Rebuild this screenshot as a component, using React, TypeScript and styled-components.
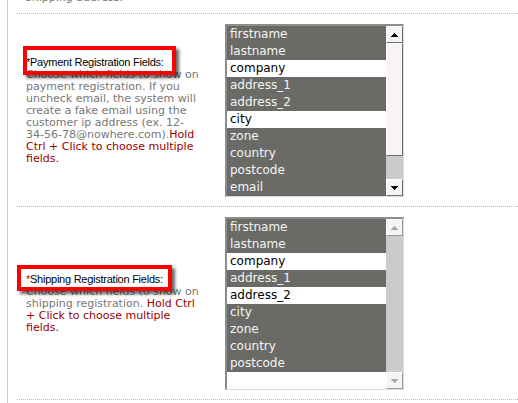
import React from 'react';
import styled, { createGlobalStyle } from 'styled-components';

const GlobalStyle = createGlobalStyle`
    html, body {
        margin: 0;
        padding: 0;
        background: #fff;
    }
    body {
        font-family: "DejaVu Sans", Verdana, sans-serif;
        overflow: hidden;
    }
`;

/**
 * PAGE FRAME
 */

const Frame = styled.div`
    margin-left: 7px;
    border-left: 1px solid #cfcfcf;
    padding-left: 9px;
    height: 403px;
    overflow: hidden;
`;

const TopRow = styled.div`
    margin-top: -8px;
    padding: 0 0 9px 9px;
    border-bottom: 1px dotted #b8b8b8;
    font-size: 11px;
    line-height: 12px;
    color: #777;
`;

const Row = styled.div`
    display: grid;
    grid-template-columns: 208px 1fr;
    border-bottom: 1px dotted #b8b8b8;
`;

const LabelCell = styled.div`
    display: flex;
    flex-direction: column;
    justify-content: center;
    padding: 0 23px 0 9px;
`;

const FieldCell = styled.div`
    padding: 10px 0 9px;
`;

/**
 * LABEL + ANNOTATION
 */

const Label = styled.div`
    position: relative;
    font-family: "Liberation Sans", Arial, sans-serif;
    font-size: 11px;
    letter-spacing: -0.25px;
    line-height: 14px;
    color: #000;
`;

const Required = styled.span<{ $red?: boolean }>`
    color: ${p => (p.$red ? '#d00000' : '#000')};
`;

interface Box {
    top: number;
    left: number;
    width: number;
    height: number;
}

const Highlight = styled.span<{ $box: Box }>`
    position: absolute;
    top: ${p => p.$box.top}px;
    left: ${p => p.$box.left}px;
    width: ${p => p.$box.width}px;
    height: ${p => p.$box.height}px;
    box-sizing: border-box;
    border: 4px solid #ff0000;
    box-shadow: 3px 3px 3px rgba(0, 0, 0, 0.6);
    z-index: 2;
    pointer-events: none;
`;

const Help = styled.div`
    font-size: 11px;
    line-height: 12px;
    color: #777;
`;

const Hint = styled.span`
    color: #990000;
`;

const NoWrap = styled.span`
    white-space: nowrap;
`;

/**
 * LIST BOX
 */

const ListBox = styled.div`
    display: flex;
    width: 179px;
    height: 173px;
    box-sizing: border-box;
    border-top: 2px solid #8c8c8c;
    border-left: 2px solid #8c8c8c;
    border-right: 1px solid #dcdcdc;
    border-bottom: 1px solid #dcdcdc;
    background: #fff;
    overflow: hidden;
`;

const Options = styled.ul`
    flex: 1;
    margin: 0;
    padding: 0;
    list-style: none;
    overflow: hidden;
`;

const Option = styled.li<{ $selected: boolean }>`
    height: 17px;
    line-height: 17px;
    padding-left: 3px;
    font-size: 12px;
    white-space: nowrap;
    background: ${p => (p.$selected ? '#6a6b67' : '#fff')};
    color: ${p => (p.$selected ? '#f4f4f4' : '#000')};
`;

const ScrollBar = styled.div`
    width: 17px;
    display: flex;
    flex-direction: column;
    background: #cbcbcb;
`;

const ScrollButton = styled.div<{ $disabled?: boolean }>`
    height: 17px;
    box-sizing: border-box;
    display: flex;
    align-items: center;
    justify-content: center;
    background: #f6f2f6;
    border: 1px solid;
    border-color: #fff ${p => (p.$disabled ? '#9a9a9a' : '#6e6e6e')} ${p => (p.$disabled ? '#9a9a9a' : '#6e6e6e')} #fff;
    color: ${p => (p.$disabled ? '#a8a8a8' : '#000')};
`;

const Thumb = styled.div<{ $size: number }>`
    height: ${p => p.$size}px;
    box-sizing: border-box;
    background: #f7f3f7;
    border: 1px solid;
    border-color: #fff #6e6e6e #6e6e6e #fff;
`;

const Track = styled.div`
    flex: 1;
`;

function Arrow({ down }: { down?: boolean }) {
    const rows = [1, 3, 5, 7];
    const order = down ? [...rows].reverse() : rows;
    return (
        <svg width="7" height="4" viewBox="0 0 7 4" shapeRendering="crispEdges">
            {order.map((w, i) => (
                <rect key={i} x={(7 - w) / 2} y={i} width={w} height={1} fill="currentColor" />
            ))}
        </svg>
    );
}

interface SelectProps {
    options: string[];
    selected: string[];
    thumb?: number;
}

function MultiSelect({ options, selected, thumb }: SelectProps) {
    const disabled = thumb === undefined;
    return (
        <ListBox>
            <Options>
                {options.map(o => (
                    <Option key={o} $selected={selected.includes(o)}>
                        {o}
                    </Option>
                ))}
            </Options>
            <ScrollBar>
                <ScrollButton $disabled={disabled}>
                    <Arrow />
                </ScrollButton>
                {!disabled && <Thumb $size={thumb} />}
                <Track />
                <ScrollButton $disabled={disabled}>
                    <Arrow down />
                </ScrollButton>
            </ScrollBar>
        </ListBox>
    );
}

const paymentFields = [
    'firstname', 'lastname', 'company', 'address_1', 'address_2',
    'city', 'zone', 'country', 'postcode', 'email', 'telephone', 'fax',
];
const shippingFields = [
    'firstname', 'lastname', 'company', 'address_1', 'address_2',
    'city', 'zone', 'country', 'postcode',
];

export default function App() {
    return (
        <>
            <GlobalStyle />
            <Frame>
                <TopRow>shipping address.</TopRow>
                <Row>
                    <LabelCell>
                        <Label>
                            <Required>*</Required>Payment Registration Fields:
                            <Highlight $box={{ top: -9, left: -3, width: 153, height: 29 }} />
                        </Label>
                        <Help>
                            Choose which fields to show on payment registration. If you uncheck email,
                            the system will create a fake email using the customer ip address (ex. 12-
                            <NoWrap>34-56-78@nowhere.com).<Hint>Hold</Hint></NoWrap>
                            <Hint> Ctrl + Click to choose multiple fields.</Hint>
                        </Help>
                    </LabelCell>
                    <FieldCell>
                        <MultiSelect
                            options={paymentFields}
                            selected={['firstname', 'lastname', 'address_1', 'address_2', 'zone', 'country', 'postcode', 'email']}
                            thumb={113}
                        />
                    </FieldCell>
                </Row>
                <Row>
                    <LabelCell>
                        <Label>
                            <Required $red>*</Required>Shipping Registration Fields:
                            <Highlight $box={{ top: -7, left: -9, width: 155, height: 26 }} />
                        </Label>
                        <Help>
                            Choose which fields to show on shipping registration.{' '}
                            <Hint>Hold Ctrl + Click to choose multiple fields.</Hint>
                        </Help>
                    </LabelCell>
                    <FieldCell>
                        <MultiSelect
                            options={shippingFields}
                            selected={['firstname', 'lastname', 'address_1', 'city', 'zone', 'country', 'postcode']}
                        />
                    </FieldCell>
                </Row>
            </Frame>
        </>
    );
}
